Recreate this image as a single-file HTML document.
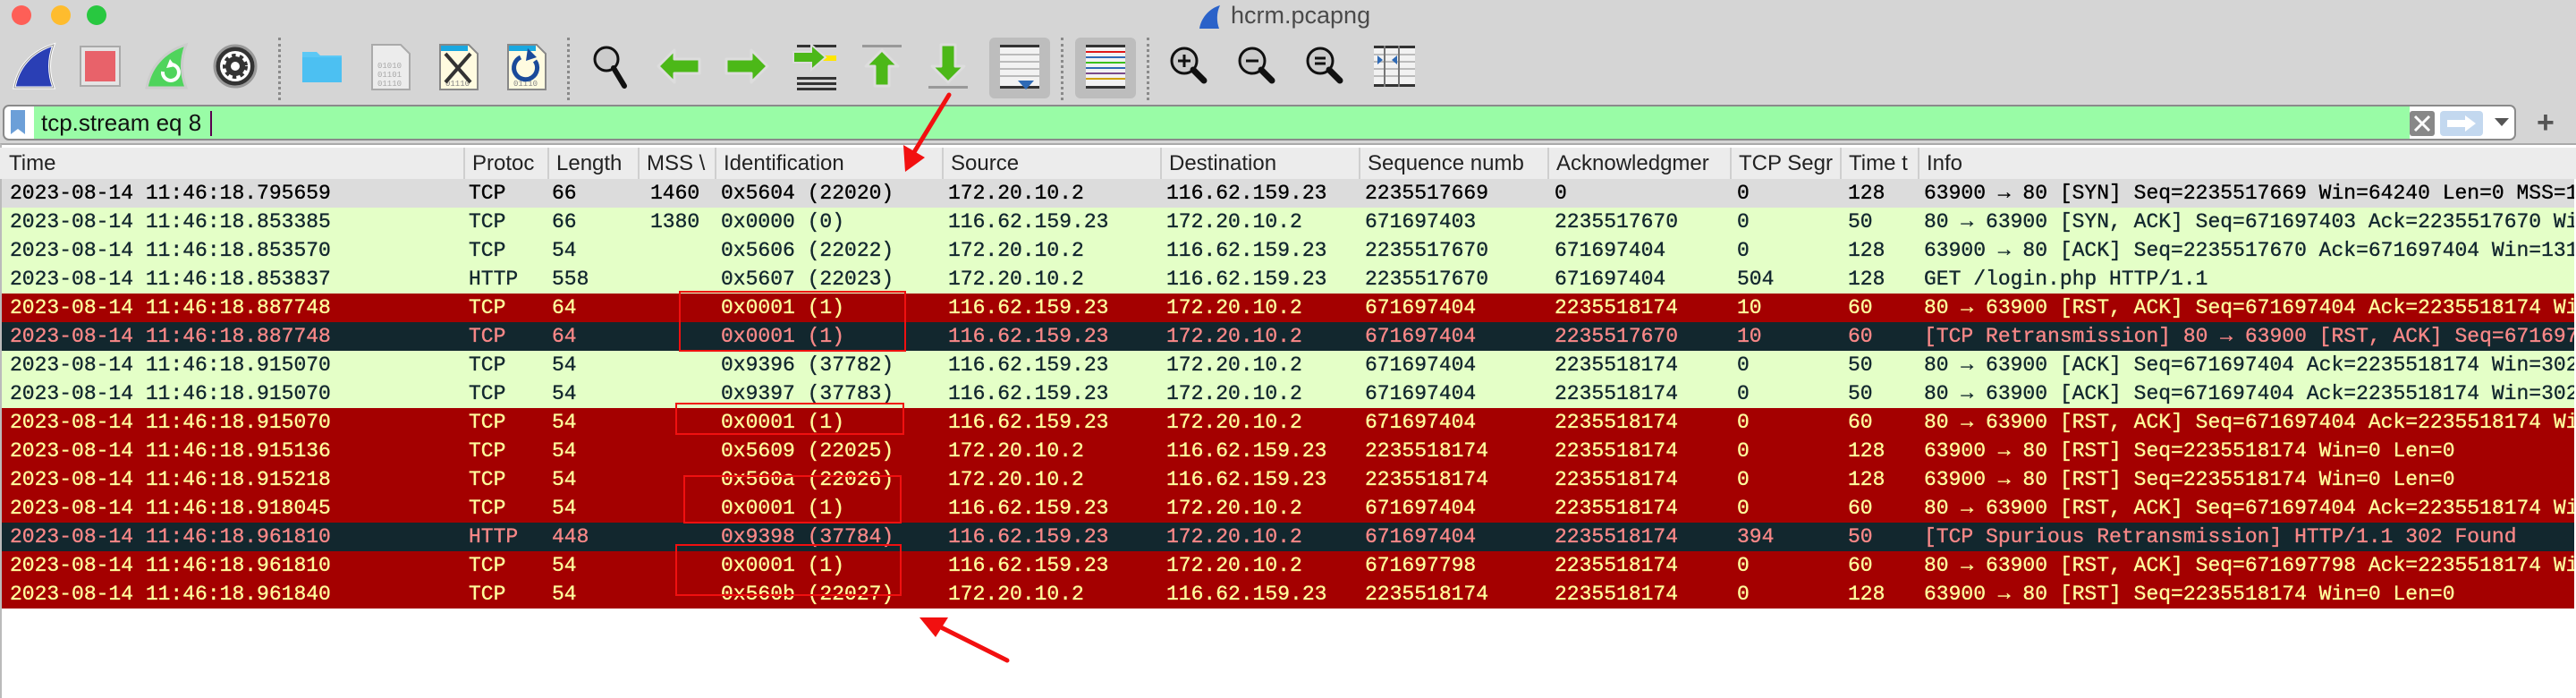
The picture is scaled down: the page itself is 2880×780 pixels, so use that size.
<!DOCTYPE html>
<html><head><meta charset="utf-8"><style>
*{margin:0;padding:0;box-sizing:border-box}
body{width:2880px;height:780px;background:#d5d5d5;position:relative;overflow:hidden;font-family:"Liberation Sans",sans-serif}
.abs{position:absolute}
.dot{position:absolute;top:6px;width:22px;height:22px;border-radius:50%}
.sep{position:absolute;top:42px;height:70px;border-left:3px dotted #8a8a8a}
.ic{position:absolute;top:46px;width:56px;height:56px}
#list{position:absolute;left:0;top:160px;width:2880px;height:620px;background:#fff;border-left:2px solid #bbb;border-top:2px solid #aaa}
.hdr{position:absolute;top:165px;left:0;width:2880px;height:35px;background:#ececec}
.h{position:absolute;top:165px;height:35px;line-height:35px;font-size:24px;color:#222;padding-left:8px;border-left:2px solid #cfcfcf;white-space:nowrap;overflow:hidden}
.row{position:absolute;left:2px;width:2876px;height:32px;font-family:"Liberation Mono",monospace;font-size:23px;line-height:32px;white-space:pre;overflow:hidden;-webkit-text-stroke:0.35px currentColor}
.row span{position:absolute;top:0}
.g{background:#e4ffc7;color:#12272e}
.s{background:#dcdcdc;color:#000}
.r{background:#a40000;color:#fffc9c}
.d{background:#12272e;color:#f78787}
.box{position:absolute;border:2px solid #f01010}
</style></head><body>
<div class="dot" style="left:13px;background:#fe5f57;top:6px"></div>
<div class="dot" style="left:57px;background:#febc2e"></div>
<div class="dot" style="left:97px;background:#28c840"></div>
<svg class="abs" style="left:1338px;top:4px" width="30" height="30" viewBox="0 0 30 30"><path d="M3 28 C5 15 15 5 26 2 C22 10 22 20 25 28 Z" fill="#2a62c9"/></svg>
<div class="abs" style="left:1376px;top:2px;font-size:27px;color:#4a4a4a">hcrm.pcapng</div>

<svg class="ic" style="left:12px" viewBox="0 0 56 56"><path d="M4 52 C8 30 22 12 48 4 C42 20 42 36 48 52 Z" fill="#2a3fb5" stroke="#fff" stroke-width="3"/><path d="M4 52 C8 30 22 12 48 4 C42 20 42 36 48 52 Z" fill="none" stroke="#999" stroke-width="1"/></svg>
<svg class="ic" style="left:84px" viewBox="0 0 56 56"><rect x="6" y="6" width="44" height="44" fill="#e4e4e4" stroke="#aaa" stroke-width="2"/><rect x="11" y="11" width="34" height="34" fill="#e8626a"/></svg>
<svg class="ic" style="left:160px" viewBox="0 0 56 56"><path d="M4 52 C8 30 22 12 48 4 C42 20 42 36 48 52 Z" fill="#4fd45c" stroke="#ccc" stroke-width="3"/><path d="M30 26 A9 9 0 1 1 22 34" fill="none" stroke="#fff" stroke-width="4"/><path d="M30 20 L36 28 L26 30 Z" fill="#fff"/></svg>
<svg class="ic" style="left:235px" viewBox="0 0 56 56"><circle cx="28" cy="28" r="23" fill="#333" stroke="#999" stroke-width="3"/><circle cx="28" cy="28" r="17" fill="#fff"/><circle cx="28" cy="28" r="11" fill="#333" stroke="#333" stroke-width="6" stroke-dasharray="4 4"/><circle cx="28" cy="28" r="5" fill="#fff"/></svg>
<div class="sep" style="left:311px"></div>
<svg class="ic" style="left:332px" viewBox="0 0 56 56"><path d="M6 12 h16 l4 4 h24 v30 h-44 Z" fill="#5cc8f5"/><rect x="6" y="18" width="44" height="28" fill="#4cc0f2"/></svg>
<svg class="ic" style="left:408px" viewBox="0 0 56 56"><path d="M8 4 h32 l10 10 v40 h-42 Z" fill="#ececec" stroke="#aaa" stroke-width="2"/><text x="14" y="30" font-size="9" fill="#aaa" font-family="Liberation Mono">01010</text><text x="14" y="40" font-size="9" fill="#aaa" font-family="Liberation Mono">01101</text><text x="14" y="50" font-size="9" fill="#aaa" font-family="Liberation Mono">01110</text></svg>
<svg class="ic" style="left:484px" viewBox="0 0 56 56"><path d="M8 4 h32 l10 10 v40 h-42 Z" fill="#fffbe0" stroke="#888" stroke-width="2"/><path d="M9 5 h30 v6 h-30z" fill="#1aa8e0"/><text x="14" y="50" font-size="9" fill="#888" font-family="Liberation Mono">01110</text><path d="M14 14 L42 46 M42 14 L14 46" stroke="#333" stroke-width="4"/></svg>
<svg class="ic" style="left:560px" viewBox="0 0 56 56"><path d="M8 4 h32 l10 10 v40 h-42 Z" fill="#fffbe0" stroke="#888" stroke-width="2"/><path d="M9 5 h30 v6 h-30z" fill="#1aa8e0"/><text x="14" y="50" font-size="9" fill="#888" font-family="Liberation Mono">01110</text><path d="M22 18 A13 13 0 1 0 38 22" fill="none" stroke="#1a4a9a" stroke-width="5"/><path d="M30 8 L40 18 L28 22 Z" fill="#1a4a9a"/></svg>
<div class="sep" style="left:634px"></div>
<svg class="ic" style="left:656px" viewBox="0 0 56 56"><circle cx="22" cy="20" r="13" fill="#ccc" stroke="#111" stroke-width="3"/><path d="M30 30 L42 50" stroke="#111" stroke-width="6" stroke-linecap="round"/></svg>
<svg class="ic" style="left:732px" viewBox="0 0 56 56"><path d="M4 28 L22 10 V20 H50 V36 H22 V46 Z" fill="#4cb818" stroke="#ddd" stroke-width="3" stroke-linejoin="round"/></svg>
<svg class="ic" style="left:806px" viewBox="0 0 56 56"><path d="M52 28 L34 10 V20 H6 V36 H34 V46 Z" fill="#4cb818" stroke="#ddd" stroke-width="3" stroke-linejoin="round"/></svg>
<svg class="ic" style="left:883px" viewBox="0 0 56 56"><g fill="#333"><rect x="8" y="4" width="44" height="3"/><rect x="8" y="40" width="44" height="3"/><rect x="8" y="46" width="44" height="3"/><rect x="8" y="52" width="44" height="3"/></g><rect x="36" y="16" width="16" height="6" fill="#ffe600"/><path d="M4 12 H24 V4 L40 18 L24 32 V24 H4Z" fill="#4cb818" stroke="#ddd" stroke-width="2"/></svg>
<svg class="ic" style="left:960px" viewBox="0 0 56 56"><rect x="4" y="4" width="44" height="3" fill="#999"/><path d="M26 10 L44 28 H34 V50 H18 V28 H8 Z" fill="#4cb818" stroke="#ddd" stroke-width="3" stroke-linejoin="round"/></svg>
<svg class="ic" style="left:1034px" viewBox="0 0 56 56"><rect x="4" y="50" width="44" height="3" fill="#999"/><path d="M26 46 L44 28 H34 V4 H18 V28 H8 Z" fill="#4cb818" stroke="#ddd" stroke-width="3" stroke-linejoin="round"/></svg>
<div class="abs" style="left:1106px;top:42px;width:68px;height:68px;background:#bdbdbd;border-radius:6px"></div>
<svg class="ic" style="left:1112px;top:48px" viewBox="0 0 56 56"><rect x="6" y="4" width="44" height="46" fill="#f2f2f2"/><g fill="#333"><rect x="6" y="2" width="44" height="3"/><rect x="6" y="48" width="44" height="3"/></g><g fill="#bbb"><rect x="6" y="12" width="44" height="2"/><rect x="6" y="20" width="44" height="2"/><rect x="6" y="28" width="44" height="2"/><rect x="6" y="36" width="44" height="2"/></g><path d="M26 42 H44 L35 52Z" fill="#2f6ab5"/></svg>
<div class="sep" style="left:1186px"></div>
<div class="abs" style="left:1202px;top:42px;width:68px;height:68px;background:#bdbdbd;border-radius:6px"></div>
<svg class="ic" style="left:1208px;top:48px" viewBox="0 0 56 56"><rect x="6" y="4" width="44" height="46" fill="#f2f2f2"/><rect x="6" y="2" width="44" height="3" fill="#333"/><rect x="6" y="48" width="44" height="3" fill="#333"/><rect x="6" y="9" width="44" height="2" fill="#e01818"/><rect x="6" y="15" width="44" height="2" fill="#2f6ab5"/><rect x="6" y="21" width="44" height="2" fill="#3cc01c"/><rect x="6" y="27" width="44" height="2" fill="#2f6ab5"/><rect x="6" y="33" width="44" height="2" fill="#7a4a8a"/><rect x="6" y="39" width="44" height="2" fill="#d0a000"/></svg>
<div class="sep" style="left:1282px"></div>
<svg class="ic" style="left:1302px" viewBox="0 0 56 56"><circle cx="22" cy="22" r="14" fill="#ccc" stroke="#111" stroke-width="3"/><path d="M32 32 L44 44" stroke="#111" stroke-width="7" stroke-linecap="round"/><path d="M15 22 H29 M22 15 V29" stroke="#111" stroke-width="3"/></svg>
<svg class="ic" style="left:1378px" viewBox="0 0 56 56"><circle cx="22" cy="22" r="14" fill="#ccc" stroke="#111" stroke-width="3"/><path d="M32 32 L44 44" stroke="#111" stroke-width="7" stroke-linecap="round"/><path d="M15 22 H29" stroke="#111" stroke-width="3"/></svg>
<svg class="ic" style="left:1454px" viewBox="0 0 56 56"><circle cx="22" cy="22" r="14" fill="#ccc" stroke="#111" stroke-width="3"/><path d="M32 32 L44 44" stroke="#111" stroke-width="7" stroke-linecap="round"/><path d="M16 19 H28 M16 25 H28" stroke="#111" stroke-width="3"/></svg>
<svg class="ic" style="left:1532px" viewBox="0 0 56 56"><rect x="4" y="6" width="46" height="44" fill="#f2f2f2"/><g fill="#bbb"><rect x="4" y="14" width="46" height="2"/><rect x="4" y="22" width="46" height="2"/><rect x="4" y="30" width="46" height="2"/><rect x="4" y="38" width="46" height="2"/></g><rect x="4" y="5" width="46" height="3" fill="#333"/><rect x="4" y="48" width="46" height="3" fill="#333"/><rect x="15" y="5" width="2" height="46" fill="#777"/><rect x="31" y="5" width="2" height="46" fill="#777"/><path d="M8 16 L14 21 L8 26Z M30 16 L24 21 L30 26Z" fill="#2f6ab5"/></svg>

<div class="abs" style="left:3px;top:117px;width:2810px;height:40px;background:#fff;border:2px solid #8a8a8a;border-radius:7px"></div>
<div class="abs" style="left:38px;top:119px;width:2656px;height:36px;background:#99fca6"></div>
<svg class="abs" style="left:10px;top:122px" width="20" height="30" viewBox="0 0 20 30"><path d="M2 1 H18 V28 L10 22 L2 28 Z" fill="#6c9fd8"/></svg>
<div class="abs" style="left:46px;top:118px;font-size:26px;line-height:38px;color:#111">tcp.stream eq 8</div>
<div class="abs" style="left:235px;top:124px;width:2px;height:28px;background:#5a0050"></div>
<svg class="abs" style="left:2694px;top:124px" width="28" height="28" viewBox="0 0 28 28"><rect width="28" height="28" rx="3" fill="#888"/><path d="M6 6 L22 22 M22 6 L6 22" stroke="#fff" stroke-width="3"/></svg>
<svg class="abs" style="left:2728px;top:124px" width="48" height="28" viewBox="0 0 48 28"><rect width="48" height="28" rx="4" fill="#c3d8ef"/><path d="M8 10 H28 V5 L40 14 L28 23 V18 H8Z" fill="#fff"/></svg>
<svg class="abs" style="left:2789px;top:132px" width="16" height="10"><path d="M0 0 H16 L8 9Z" fill="#555"/></svg>
<div class="abs" style="left:2836px;top:118px;font-size:34px;color:#555;font-weight:bold">+</div>

<div id="list"></div>
<div class="hdr"></div>
<div class="h" style="left:2px;width:516px;border-left:none">Time</div>
<div class="h" style="left:518px;width:94px">Protoc</div>
<div class="h" style="left:612px;width:101px">Length</div>
<div class="h" style="left:713px;width:86px">MSS \</div>
<div class="h" style="left:799px;width:254px">Identification</div>
<div class="h" style="left:1053px;width:244px">Source</div>
<div class="h" style="left:1297px;width:222px">Destination</div>
<div class="h" style="left:1519px;width:211px">Sequence numb</div>
<div class="h" style="left:1730px;width:204px">Acknowledgmer</div>
<div class="h" style="left:1934px;width:123px">TCP Segr</div>
<div class="h" style="left:2057px;width:87px">Time t</div>
<div class="h" style="left:2144px;width:736px">Info</div>

<div id="rows"></div>
<script>
var R=[
["s","2023-08-14 11:46:18.795659","TCP","66","1460","0x5604 (22020)","172.20.10.2","116.62.159.23","2235517669","0","0","128","63900 → 80 [SYN] Seq=2235517669 Win=64240 Len=0 MSS=1460"],
["g","2023-08-14 11:46:18.853385","TCP","66","1380","0x0000 (0)","116.62.159.23","172.20.10.2","671697403","2235517670","0","50","80 → 63900 [SYN, ACK] Seq=671697403 Ack=2235517670 Win=29200"],
["g","2023-08-14 11:46:18.853570","TCP","54","","0x5606 (22022)","172.20.10.2","116.62.159.23","2235517670","671697404","0","128","63900 → 80 [ACK] Seq=2235517670 Ack=671697404 Win=131328"],
["g","2023-08-14 11:46:18.853837","HTTP","558","","0x5607 (22023)","172.20.10.2","116.62.159.23","2235517670","671697404","504","128","GET /login.php HTTP/1.1"],
["r","2023-08-14 11:46:18.887748","TCP","64","","0x0001 (1)","116.62.159.23","172.20.10.2","671697404","2235518174","10","60","80 → 63900 [RST, ACK] Seq=671697404 Ack=2235518174 Win=0"],
["d","2023-08-14 11:46:18.887748","TCP","64","","0x0001 (1)","116.62.159.23","172.20.10.2","671697404","2235517670","10","60","[TCP Retransmission] 80 → 63900 [RST, ACK] Seq=671697404"],
["g","2023-08-14 11:46:18.915070","TCP","54","","0x9396 (37782)","116.62.159.23","172.20.10.2","671697404","2235518174","0","50","80 → 63900 [ACK] Seq=671697404 Ack=2235518174 Win=30208"],
["g","2023-08-14 11:46:18.915070","TCP","54","","0x9397 (37783)","116.62.159.23","172.20.10.2","671697404","2235518174","0","50","80 → 63900 [ACK] Seq=671697404 Ack=2235518174 Win=30208"],
["r","2023-08-14 11:46:18.915070","TCP","54","","0x0001 (1)","116.62.159.23","172.20.10.2","671697404","2235518174","0","60","80 → 63900 [RST, ACK] Seq=671697404 Ack=2235518174 Win=0"],
["r","2023-08-14 11:46:18.915136","TCP","54","","0x5609 (22025)","172.20.10.2","116.62.159.23","2235518174","2235518174","0","128","63900 → 80 [RST] Seq=2235518174 Win=0 Len=0"],
["r","2023-08-14 11:46:18.915218","TCP","54","","0x560a (22026)","172.20.10.2","116.62.159.23","2235518174","2235518174","0","128","63900 → 80 [RST] Seq=2235518174 Win=0 Len=0"],
["r","2023-08-14 11:46:18.918045","TCP","54","","0x0001 (1)","116.62.159.23","172.20.10.2","671697404","2235518174","0","60","80 → 63900 [RST, ACK] Seq=671697404 Ack=2235518174 Win=0"],
["d","2023-08-14 11:46:18.961810","HTTP","448","","0x9398 (37784)","116.62.159.23","172.20.10.2","671697404","2235518174","394","50","[TCP Spurious Retransmission] HTTP/1.1 302 Found"],
["r","2023-08-14 11:46:18.961810","TCP","54","","0x0001 (1)","116.62.159.23","172.20.10.2","671697798","2235518174","0","60","80 → 63900 [RST, ACK] Seq=671697798 Ack=2235518174 Win=0"],
["r","2023-08-14 11:46:18.961840","TCP","54","","0x560b (22027)","172.20.10.2","116.62.159.23","2235518174","2235518174","0","128","63900 → 80 [RST] Seq=2235518174 Win=0 Len=0"]
];
var X=[11,524,617,727,806,1060,1304,1526,1738,1942,2066,2151];
var h="";
R.forEach(function(r,i){h+='<div class="row '+r[0]+'" style="top:'+(200+i*32)+'px">';
for(var c=0;c<12;c++){h+='<span style="left:'+(X[c]-2)+'px">'+r[c+1]+'</span>';}h+='</div>';});
document.getElementById("rows").innerHTML=h;
</script>

<div class="box" style="left:759px;top:325px;width:254px;height:68px"></div>
<div class="box" style="left:755px;top:450px;width:256px;height:36px"></div>
<div class="box" style="left:764px;top:531px;width:244px;height:54px"></div>
<div class="box" style="left:755px;top:608px;width:253px;height:58px"></div>
<svg class="abs" style="left:0;top:0" width="2880" height="780">
<line x1="1061" y1="106" x2="1022" y2="170" stroke="#f21010" stroke-width="5" stroke-linecap="round"/>
<path d="M1012 192 L1010 162 L1034 176 Z" fill="#f21010"/>
<line x1="1126" y1="738" x2="1050" y2="700" stroke="#f21010" stroke-width="5" stroke-linecap="round"/>
<path d="M1028 690 L1060 690 L1046 712 Z" fill="#f21010"/>
</svg>
</body></html>
